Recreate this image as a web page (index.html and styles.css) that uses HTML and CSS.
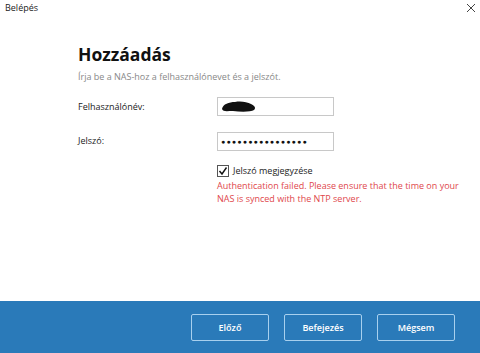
FILE: index.html
```html
<!DOCTYPE html>
<html lang="hu">
<head>
    <meta charset="UTF-8">
    <title>Belépés</title>
    <link rel="stylesheet" href="styles.css">
</head>
<body>
    <div class="window">
        <div class="titlebar">
            <span class="title">Belépés</span>
            <svg class="close" width="10" height="10" viewBox="0 0 10 10">
                <path d="M1 1 L9 9 M9 1 L1 9" stroke="#444" stroke-width="1" fill="none"/>
            </svg>
        </div>

        <div class="content">
            <h1>Hozzáadás</h1>
            <p class="subtitle">Írja be a NAS-hoz a felhasználónevet és a jelszót.</p>

            <div class="form">
                <label class="label">Felhasználónév:</label>
                <div class="field">
                    <svg class="blob" width="36" height="12" viewBox="0 0 36 12">
                        <path d="M1 8 C2 3 8 1 14 1 C20 0 26 1 30 3 C34 5 35 7 33 9 C30 11 20 11 12 10 C6 10 2 11 1 8 Z" fill="#111"/>
                    </svg>
                </div>

                <label class="label">Jelszó:</label>
                <div class="field dots">●●●●●●●●●●●●●●●●</div>

                <div></div>
                <div class="remember">
                    <span class="checkbox">
                        <svg width="10" height="10" viewBox="0 0 10 10">
                            <path d="M1.5 5 L4 8 L8.5 1.5" stroke="#111" stroke-width="1.4" fill="none"/>
                        </svg>
                    </span>
                    <span>Jelszó megjegyzése</span>
                </div>

                <div></div>
                <p class="error">Authentication failed. Please ensure that the time on your NAS is synced with the NTP server.</p>
            </div>
        </div>

        <div class="footer">
            <button>Előző</button>
            <button>Befejezés</button>
            <button>Mégsem</button>
        </div>
    </div>
</body>
</html>
```

FILE: styles.css
```css
body {
    margin: 0;
    padding: 0;
    background-color: #fff;
    font-family: "Open Sans", "Noto Sans", sans-serif;
    color: #222;
}

.window {
    width: 480px;
    height: 353px;
    display: flex;
    flex-direction: column;
}

.titlebar {
    height: 15px;
    display: flex;
    justify-content: space-between;
    align-items: center;
    padding: 0 4px 0 5px;
}

.title {
    font-size: 9px;
    color: #222;
}

.content {
    flex: 1;
    padding: 27px 0 0 78px;
}

h1 {
    margin: 0;
    font-size: 17.5px;
    font-weight: 700;
    color: #111;
    line-height: 24px;
}

.subtitle {
    margin: 4px 0 0;
    font-size: 9px;
    color: #888;
}

.form {
    display: grid;
    grid-template-columns: 139px 117px;
    align-items: center;
    margin-top: 14px;
}

.label {
    font-size: 9px;
    color: #222;
}

.field {
    height: 17px;
    border: 1px solid #c8c8c8;
    display: flex;
    align-items: center;
    padding: 0 3px;
    margin-bottom: 16px;
}

.form .label {
    margin-bottom: 16px;
}

.dots {
    font-size: 7px;
    letter-spacing: 1.2px;
    color: #111;
    margin-bottom: 13px;
}

.remember {
    display: flex;
    align-items: center;
    gap: 4px;
    font-size: 9px;
    white-space: nowrap;
}

.checkbox {
    width: 10px;
    height: 10px;
    border: 1px solid #555;
    display: flex;
    align-items: center;
    justify-content: center;
}

.error {
    grid-column: 2;
    width: 250px;
    margin: 2px 0 0;
    font-size: 9px;
    line-height: 13px;
    color: #e0474c;
}

.footer {
    height: 52px;
    background-color: #2a7ab9;
    display: flex;
    justify-content: flex-end;
    align-items: center;
    gap: 15px;
    padding-right: 25px;
}

button {
    width: 78px;
    height: 27px;
    background: transparent;
    border: 1px solid #a8d0ee;
    border-radius: 2px;
    color: #fff;
    font-family: inherit;
    font-size: 9px;
    font-weight: 600;
}
```
